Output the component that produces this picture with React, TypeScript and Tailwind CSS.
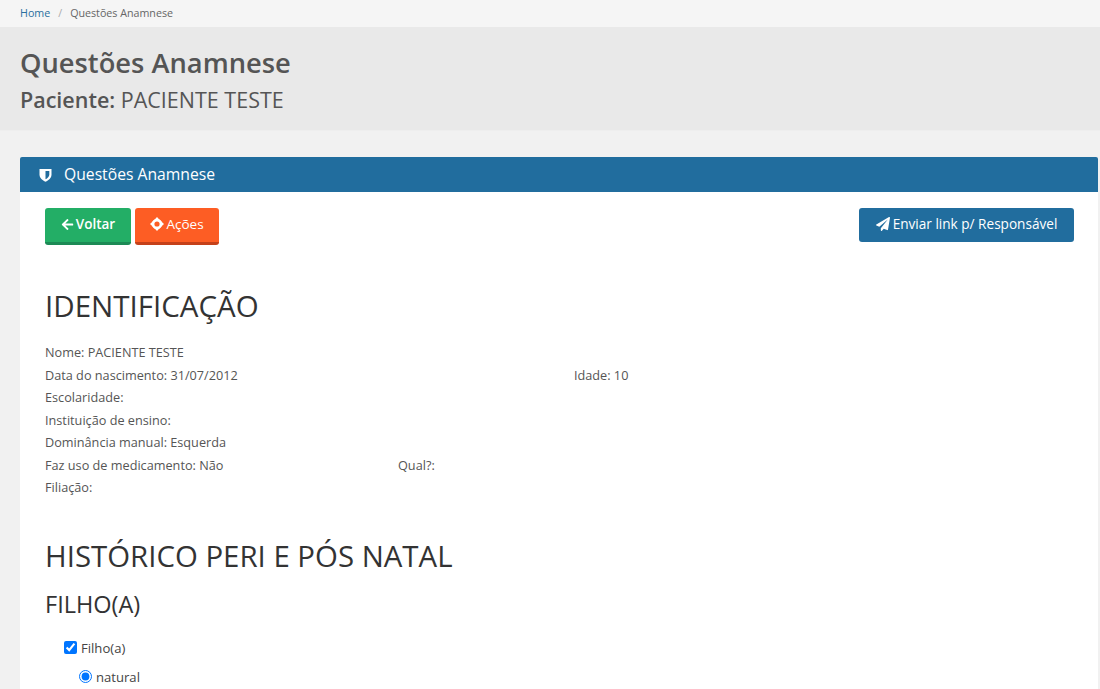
import { FaArrowLeft, FaPaperPlane } from 'react-icons/fa';

function ShieldIcon() {
  return (
    <svg viewBox="0 0 13 14" className="w-[13px] h-[14px]">
      <path d="M0.5 1 H12.5 V6.5 C12.5 10 9.5 12.3 6.5 13.8 C3.5 12.3 0.5 10 0.5 6.5 Z" fill="#fff" />
      <path d="M6.5 3 H10.3 V6.5 C10.3 8.7 8.6 10.2 6.5 11.3 Z" fill="#216d9e" />
    </svg>
  );
}

function ActionsIcon() {
  return (
    <svg viewBox="0 0 14 14" className="w-[14px] h-[14px]">
      <circle cx="7" cy="7" r="3.9" fill="none" stroke="#fff" strokeWidth="2.6" />
      <path d="M7 0 L10.2 3.4 H3.8 Z M7 14 L10.2 10.6 H3.8 Z M0 7 L3.4 3.8 V10.2 Z M14 7 L10.6 3.8 V10.2 Z" fill="#fff" />
    </svg>
  );
}

function InfoLine({ children }: { children: React.ReactNode }) {
  return <div className="h-[22.5px] leading-[22.5px]">{children}</div>;
}

export default function App() {
  return (
    <div className="h-[689px] overflow-hidden bg-[#f1f1f1] font-['Open_Sans',sans-serif] text-[#555]">
      <div className="h-[27px] bg-[#f5f5f5] pl-[20px] pt-[4px] text-[10.7px] leading-[18px] flex">
        <span className="text-[#2a6f9e]">Home</span>
        <span className="text-[#aaa] mx-[8px]">/</span>
        <span className="text-[#666]">Questões Anamnese</span>
      </div>

      <div className="h-[104px] bg-[#e9e9e9] border-b border-[#eee] pl-[20px] pt-[17px]">
        <h1 className="text-[27.3px] leading-[38px] font-semibold text-[#555]">Questões Anamnese</h1>
        <h2 className="text-[21.5px] leading-[34px] text-[#555] mt-[1px]">
          <span className="font-semibold">Paciente:</span> PACIENTE TESTE
        </h2>
      </div>

      <div className="ml-[20px] mr-[2px] mt-[26px] bg-white rounded-t-[2px] h-[600px]">
        <div className="h-[35px] bg-[#216d9e] text-white flex items-center pl-[19px] rounded-t-[2px]">
          <ShieldIcon />
          <span className="ml-[12px] text-[15.7px]">Questões Anamnese</span>
        </div>

        <div className="pl-[25px] pr-[24px]">
          <div className="flex justify-between pt-[16px]">
            <div className="flex gap-[4px]">
              <button className="w-[86px] h-[37px] pb-[2px] bg-[#23ae66] border-b-[3px] border-[#1c8a55] rounded-[3px] text-white text-[13.5px] font-semibold flex items-center justify-center gap-[2px]">
                <FaArrowLeft className="w-[13px] h-[13px]" />
                Voltar
              </button>
              <button className="w-[84px] h-[37px] pb-[2px] bg-[#fd5d24] border-b-[3px] border-[#c5411a] rounded-[3px] text-white text-[13.5px] flex items-center justify-center gap-[2px]">
                <ActionsIcon />
                Ações
              </button>
            </div>
            <button className="w-[215px] h-[34px] pb-[2px] bg-[#216d9e] rounded-[3px] text-white text-[13.6px] flex items-center justify-center gap-[3px]">
              <FaPaperPlane className="w-[14px] h-[14px]" />
              Enviar link p/ Responsável
            </button>
          </div>

          <h3 className="text-[29.5px] leading-[42px] text-[#333] mt-[40px]">IDENTIFICAÇÃO</h3>

          <div className="mt-[14px] text-[12.7px] text-[#555]">
            <InfoLine>Nome: PACIENTE TESTE</InfoLine>
            <InfoLine>
              <div className="flex">
                <span className="w-[529px]">Data do nascimento: 31/07/2012</span>
                <span>Idade: 10</span>
              </div>
            </InfoLine>
            <InfoLine>Escolaridade:</InfoLine>
            <InfoLine>Instituição de ensino:</InfoLine>
            <InfoLine>Dominância manual: Esquerda</InfoLine>
            <InfoLine>
              <div className="flex">
                <span className="w-[353px]">Faz uso de medicamento: Não</span>
                <span>Qual?:</span>
              </div>
            </InfoLine>
            <InfoLine>Filiação:</InfoLine>
          </div>

          <h3 className="text-[29.4px] leading-[42px] text-[#333] mt-[36px]">HISTÓRICO PERI E PÓS NATAL</h3>
          <h4 className="text-[23.5px] leading-[30px] text-[#333] mt-[12px]">FILHO(A)</h4>

          <label className="flex items-center mt-[20px] ml-[19px] text-[13.1px] font-medium text-[#444] h-[20px]">
            <input type="checkbox" defaultChecked className="w-[13px] h-[13px] mr-[4px] mt-[-2px] accent-[#0075ff]" />
            Filho(a)
          </label>
          <label className="flex items-center mt-[9px] ml-[34px] text-[13.1px] font-medium text-[#444] h-[20px]">
            <input type="radio" defaultChecked className="w-[13px] h-[13px] mr-[4px] mt-[-2px] accent-[#0075ff]" />
            natural
          </label>
        </div>
      </div>
    </div>
  );
}
